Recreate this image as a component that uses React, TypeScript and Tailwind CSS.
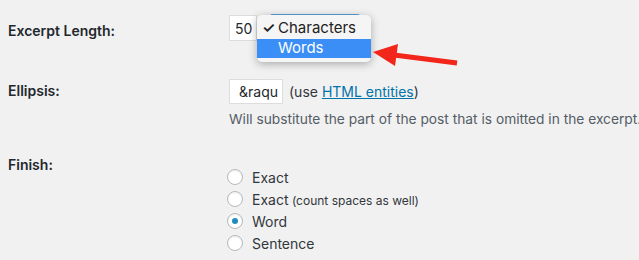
import React from 'react';

const font = { fontFamily: 'Inter, "Liberation Sans", sans-serif' };

const Radio = ({ checked, label, note }: { checked?: boolean; label: string; note?: string }) => (
  <label className="flex items-center h-[22px] gap-[9px]">
    <span className="w-4 h-4 rounded-full bg-white border border-[#b4b9be] shadow-[inset_0_1px_2px_rgba(0,0,0,0.07)] flex items-center justify-center">
      {checked && <span className="w-[6px] h-[6px] rounded-full bg-[#1e8cbe]" />}
    </span>
    <span className="text-[14px] text-[#32373c]">
      {label}
      {note && <span className="text-[12px]"> {note}</span>}
    </span>
  </label>
);

export default function App() {
  return (
    <div className="relative w-[639px] h-[260px] bg-[#f1f1f1] overflow-hidden text-[#23282d]" style={font}>
      <div className="px-2">
        {/* Excerpt length */}
        <div className="flex items-start pt-[15px]">
          <div className="w-[221px] shrink-0 pt-[6px] text-[14px] leading-5 font-semibold">Excerpt Length:</div>
          <div className="relative flex">
            <div className="w-[28px] h-[26px] bg-white border border-[#ddd] text-[14px] flex items-center pl-[5px]">50</div>
            <div className="absolute left-[40px] top-[-1px] w-[92px] h-[26px] border-t-2 border-[#5b9dd9] rounded-sm" />
            <div className="absolute left-[28px] top-0 w-[114px] bg-[#f5f5f5] rounded-[5px] shadow-[0_2px_8px_rgba(0,0,0,0.3)] pt-[2px] pb-[4px] text-[15px] text-[#222]">
              <div className="h-[22px] flex items-center pl-[5px]">
                <span className="w-[16px] text-[15px] font-semibold">✓</span>
                <span>Characters</span>
              </div>
              <div className="h-[19px] flex items-center pl-[21px] bg-[#3a8ef6] text-white">Words</div>
            </div>
          </div>
        </div>

        {/* Ellipsis */}
        <div className="flex items-start mt-[38px]">
          <div className="w-[221px] shrink-0 pt-[2px] text-[14px] leading-5 font-semibold">Ellipsis:</div>
          <div className="flex flex-col whitespace-nowrap">
            <div className="flex items-center gap-[6px]">
              <div className="w-[54px] h-[25px] bg-white border border-[#ddd] text-[14px] flex items-center pl-[9px]">&amp;raqu</div>
              <span className="text-[14px] text-[#32373c]">
                (use <a className="text-[#0073aa] underline">HTML entities</a>)
              </span>
            </div>
            <p className="mt-[5px] text-[13.75px] leading-5 text-[#555d66]">
              Will substitute the part of the post that is omitted in the excerpt.
            </p>
          </div>
        </div>

        {/* Finish */}
        <div className="flex items-start mt-[26px]">
          <div className="w-[221px] shrink-0 text-[14px] leading-5 font-semibold">Finish:</div>
          <div className="flex flex-col pt-[11px] -ml-[2px]">
            <Radio label="Exact" />
            <Radio label="Exact" note="(count spaces as well)" />
            <Radio label="Word" checked />
            <Radio label="Sentence" />
          </div>
        </div>
      </div>

      <svg className="absolute left-0 top-0" width="639" height="260" viewBox="0 0 639 260">
        <line x1="394" y1="55" x2="457" y2="63" stroke="#f2261b" strokeWidth="5" />
        <polygon points="373,52 398,44 395,66" fill="#f2261b" />
      </svg>
    </div>
  );
}
